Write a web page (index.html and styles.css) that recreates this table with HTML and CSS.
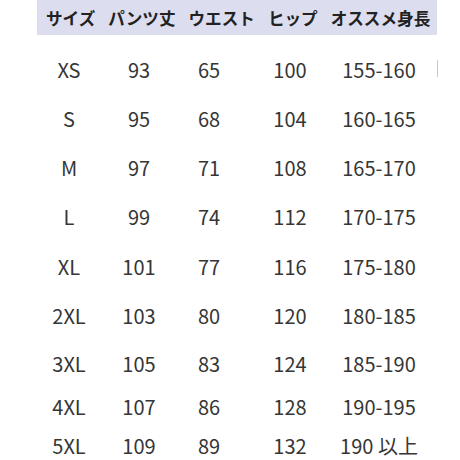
FILE: index.html
```html
<!DOCTYPE html>
<html lang="ja">
<head>
<meta charset="utf-8">
<title>サイズ表</title>
<link rel="stylesheet" href="styles.css">
</head>
<body>
<div class="chart">
  <div class="head">
    <span>サイズ</span><span>パンツ丈</span><span>ウエスト</span><span>ヒップ</span><span>オススメ身長</span>
  </div>
  <div class="body">
    <div>XS</div><div>93</div><div>65</div><div>100</div><div>155-160</div>
    <div>S</div><div>95</div><div>68</div><div>104</div><div>160-165</div>
    <div>M</div><div>97</div><div>71</div><div>108</div><div>165-170</div>
    <div>L</div><div>99</div><div>74</div><div>112</div><div>170-175</div>
    <div>XL</div><div>101</div><div>77</div><div>116</div><div>175-180</div>
    <div>2XL</div><div>103</div><div>80</div><div>120</div><div>180-185</div>
    <div>3XL</div><div>105</div><div>83</div><div>124</div><div>185-190</div>
    <div>4XL</div><div>107</div><div>86</div><div>128</div><div>190-195</div>
    <div>5XL</div><div>109</div><div>89</div><div>132</div><div>190 以上</div>
    <i class="mark"></i>
  </div>
</div>
</body>
</html>
```
FILE: styles.css
```css
html, body {
  margin: 0;
  padding: 0;
  background: #ffffff;
}
body {
  width: 460px;
  height: 460px;
  overflow: hidden;
  font-family: "Noto Sans CJK JP", "Noto Sans", sans-serif;
  color: #333333;
}
.head {
  margin-left: 37px;
  width: 400px;
  height: 35px;
  box-sizing: border-box;
  padding-left: 9px;
  background: #dcdeef;
  display: flex;
  align-items: center;
  gap: 13px;
  font-size: 16.6px;
  font-weight: 700;
  color: #222222;
  line-height: 1;
  padding-top: 1px;
}
.body {
  position: relative;
  margin-left: 34px;
  padding-top: 10.5px;
  display: grid;
  grid-template-columns: 70px 70px 70px 92px 86px;
  grid-template-rows: 49px 49px 49px 49.5px 49.5px 49px 46px 40.5px 38px;
  font-size: 20px;
  font-weight: 400;
  line-height: 1;
  color: #363636;
}
.body > div {
  display: flex;
  align-items: center;
  justify-content: center;
  white-space: nowrap;
}
.mark {
  position: absolute;
  left: 403px;
  top: 25px;
  width: 1px;
  height: 17px;
  background: #c8c8c8;
}
```
